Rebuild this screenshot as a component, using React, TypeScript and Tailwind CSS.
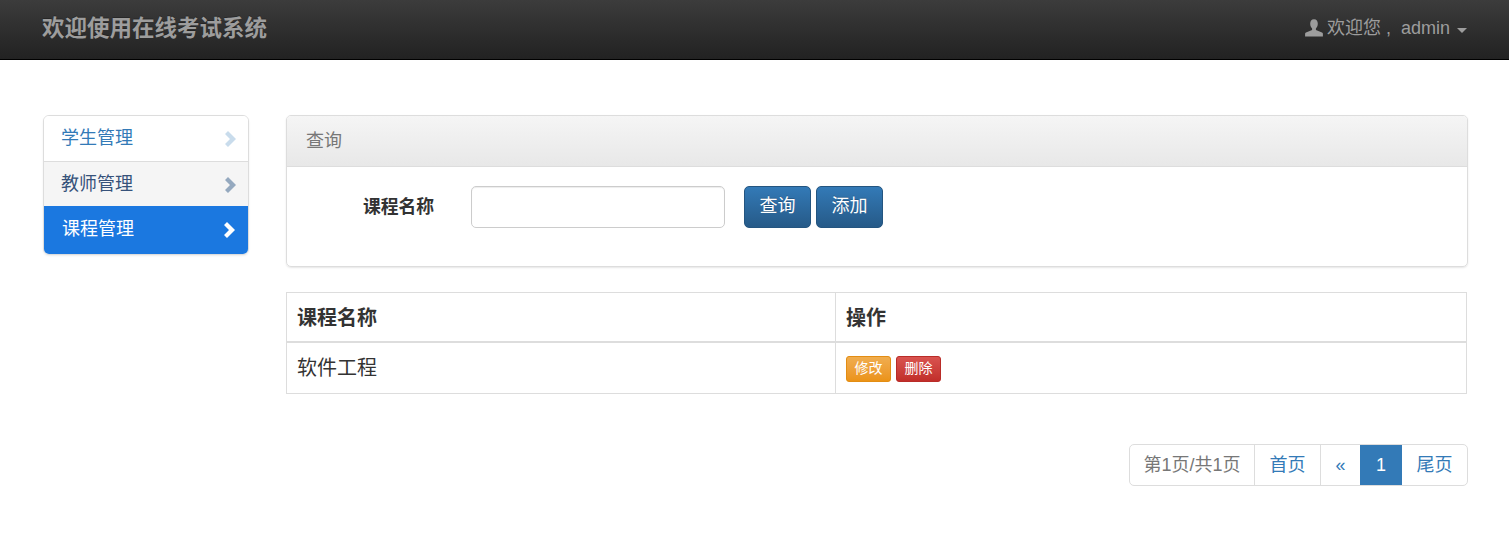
const font = { fontFamily: '"Liberation Sans", "Noto Sans CJK SC", sans-serif' }

function UserIcon() {
  return (
    <svg viewBox="0 0 18 18" className="h-[18px] w-[18px] fill-[#9d9d9d]">
      <path d="M9 0.2C6.4 0.2 5.2 2.2 5.2 4.8c0 2 .8 3.6 1.9 4.6v1.5L1 13.4c-.6.3-.9.8-.9 1.4V17.5h17.8V14.8c0-.6-.3-1.1-.9-1.4l-6.1-2.5V9.4c1.1-1 1.9-2.6 1.9-4.6C12.8 2.2 11.6.2 9 .2z" />
    </svg>
  )
}

function Chevron({ className }: { className: string }) {
  return (
    <svg viewBox="0 0 11 16" className={`h-[16px] w-[11px] ${className}`}>
      <polygon points="0,3 3,0 11,8 3,16 0,13 5,8" fill="currentColor" />
    </svg>
  )
}

function SideItem({ label, className, chevron }: { label: string; className: string; chevron: string }) {
  return (
    <a className={`flex items-center justify-between ${className}`}>
      <span>{label}</span>
      <Chevron className={chevron} />
    </a>
  )
}

function PrimaryButton({ label }: { label: string }) {
  return (
    <button
      type="button"
      className="h-[42px] w-[67px] rounded-[5px] border border-[#245580] bg-gradient-to-b from-[#337ab7] to-[#265a88] pb-[2px] text-[18px] text-white [text-shadow:0_-1px_0_rgba(0,0,0,0.2)]"
    >
      {label}
    </button>
  )
}

export default function App() {
  return (
    <div className="h-[542px] bg-white text-[18px] text-[#333]" style={font}>
      {/* Navbar */}
      <nav className="flex h-[60px] items-center justify-between border-b border-black bg-gradient-to-b from-[#3c3c3c] to-[#222] pl-[42px] pr-[42px]">
        <span className="pb-[2px] text-[22.5px] font-bold text-[#9d9d9d] [text-shadow:0_-1px_0_rgba(0,0,0,0.25)]">欢迎使用在线考试系统</span>
        <div className="flex items-center pb-[3px] text-[18px] text-[#9d9d9d]">
          <UserIcon />
          <span className="ml-[4px]">欢迎您</span>
          <span className="ml-[5px] mr-[10px]">,</span>
          <span>admin</span>
          <span className="ml-[7px] mt-[4px] h-0 w-0 border-x-[5px] border-t-[5px] border-x-transparent border-t-[#9d9d9d]" />
        </div>
      </nav>

      <div className="flex gap-[37px] pl-[43px] pr-[41px] pt-[55px]">
        {/* Sidebar */}
        <aside className="h-[140px] w-[206px] shrink-0 overflow-hidden rounded-[6px] border border-[#ddd] shadow-[0_1px_2px_rgba(0,0,0,0.075)]">
          <SideItem
            label="学生管理"
            className="h-[46px] border-b border-[#ddd] bg-white pl-[17px] pr-[12px] text-[#337ab7]"
            chevron="mt-[1px] text-[#c9dcec]"
          />
          <SideItem
            label="教师管理"
            className="h-[44px] bg-[#f5f5f5] pl-[17px] pr-[12px] text-[#36527a]"
            chevron="mt-[1px] text-[#95a9bf]"
          />
          <SideItem
            label="课程管理"
            className="h-[48px] bg-[#1b78e0] pb-[2px] pl-[18px] pr-[13px] text-white"
            chevron="mt-[2px] text-white"
          />
        </aside>

        <main className="min-w-0 flex-1">
          {/* Query panel */}
          <section className="h-[152px] overflow-hidden rounded-[5px] border border-[#ddd] shadow-[0_1px_2px_rgba(0,0,0,0.1)]">
            <div className="flex h-[51px] items-center border-b border-[#ddd] bg-gradient-to-b from-[#f5f5f5] to-[#e8e8e8] px-[19px] text-[#777]">
              查询
            </div>
            <div className="flex items-center pt-[19px]">
              <label className="ml-[76px] w-[108px] text-[17.8px] font-bold">课程名称</label>
              <input
                type="text"
                className="h-[42px] w-[254px] rounded-[5px] border border-[#ccc] bg-white shadow-[inset_0_1px_1px_rgba(0,0,0,0.075)]"
              />
              <div className="ml-[19px] flex gap-[5px]">
                <PrimaryButton label="查询" />
                <PrimaryButton label="添加" />
              </div>
            </div>
          </section>

          {/* Course table */}
          <table className="mt-[25px] w-[1181px] table-fixed border-collapse border border-[#ddd] text-[20px]">
            <thead>
              <tr className="h-[49px] border-b-2 border-[#ddd] text-left">
                <th className="w-[549px] border-r border-[#ddd] px-[10px] pt-[2px] font-bold">课程名称</th>
                <th className="border-r border-[#ddd] px-[10px] pt-[2px] font-bold">操作</th>
              </tr>
            </thead>
            <tbody>
              <tr className="h-[52px]">
                <td className="border-r border-[#ddd] px-[10px]">软件工程</td>
                <td className="px-[10px] pt-[2px]">
                  <div className="flex gap-[5px]">
                    <button
                      type="button"
                      className="h-[26px] w-[45px] rounded-[3px] border border-[#e38d13] bg-gradient-to-b from-[#f0ad4e] to-[#eb9316] text-[14px] text-white"
                    >
                      修改
                    </button>
                    <button
                      type="button"
                      className="h-[26px] w-[45px] rounded-[3px] border border-[#b92c28] bg-gradient-to-b from-[#d9534f] to-[#c12e2a] text-[14px] text-white"
                    >
                      删除
                    </button>
                  </div>
                </td>
              </tr>
            </tbody>
          </table>

          {/* Pagination */}
          <div className="mt-[50px] flex justify-end">
            <div className="flex h-[42px] overflow-hidden rounded-[5px] border border-[#ddd] text-[18px] leading-[40px]">
              <span className="w-[125px] border-r border-[#ddd] text-center text-[#777]">第1页/共1页</span>
              <a className="w-[66px] border-r border-[#ddd] text-center text-[#337ab7]">首页</a>
              <a className="w-[39px] text-center text-[#337ab7]">«</a>
              <span className="w-[42px] bg-[#337ab7] text-center text-white">1</span>
              <a className="w-[65px] text-center text-[#337ab7]">尾页</a>
            </div>
          </div>
        </main>
      </div>
    </div>
  )
}
